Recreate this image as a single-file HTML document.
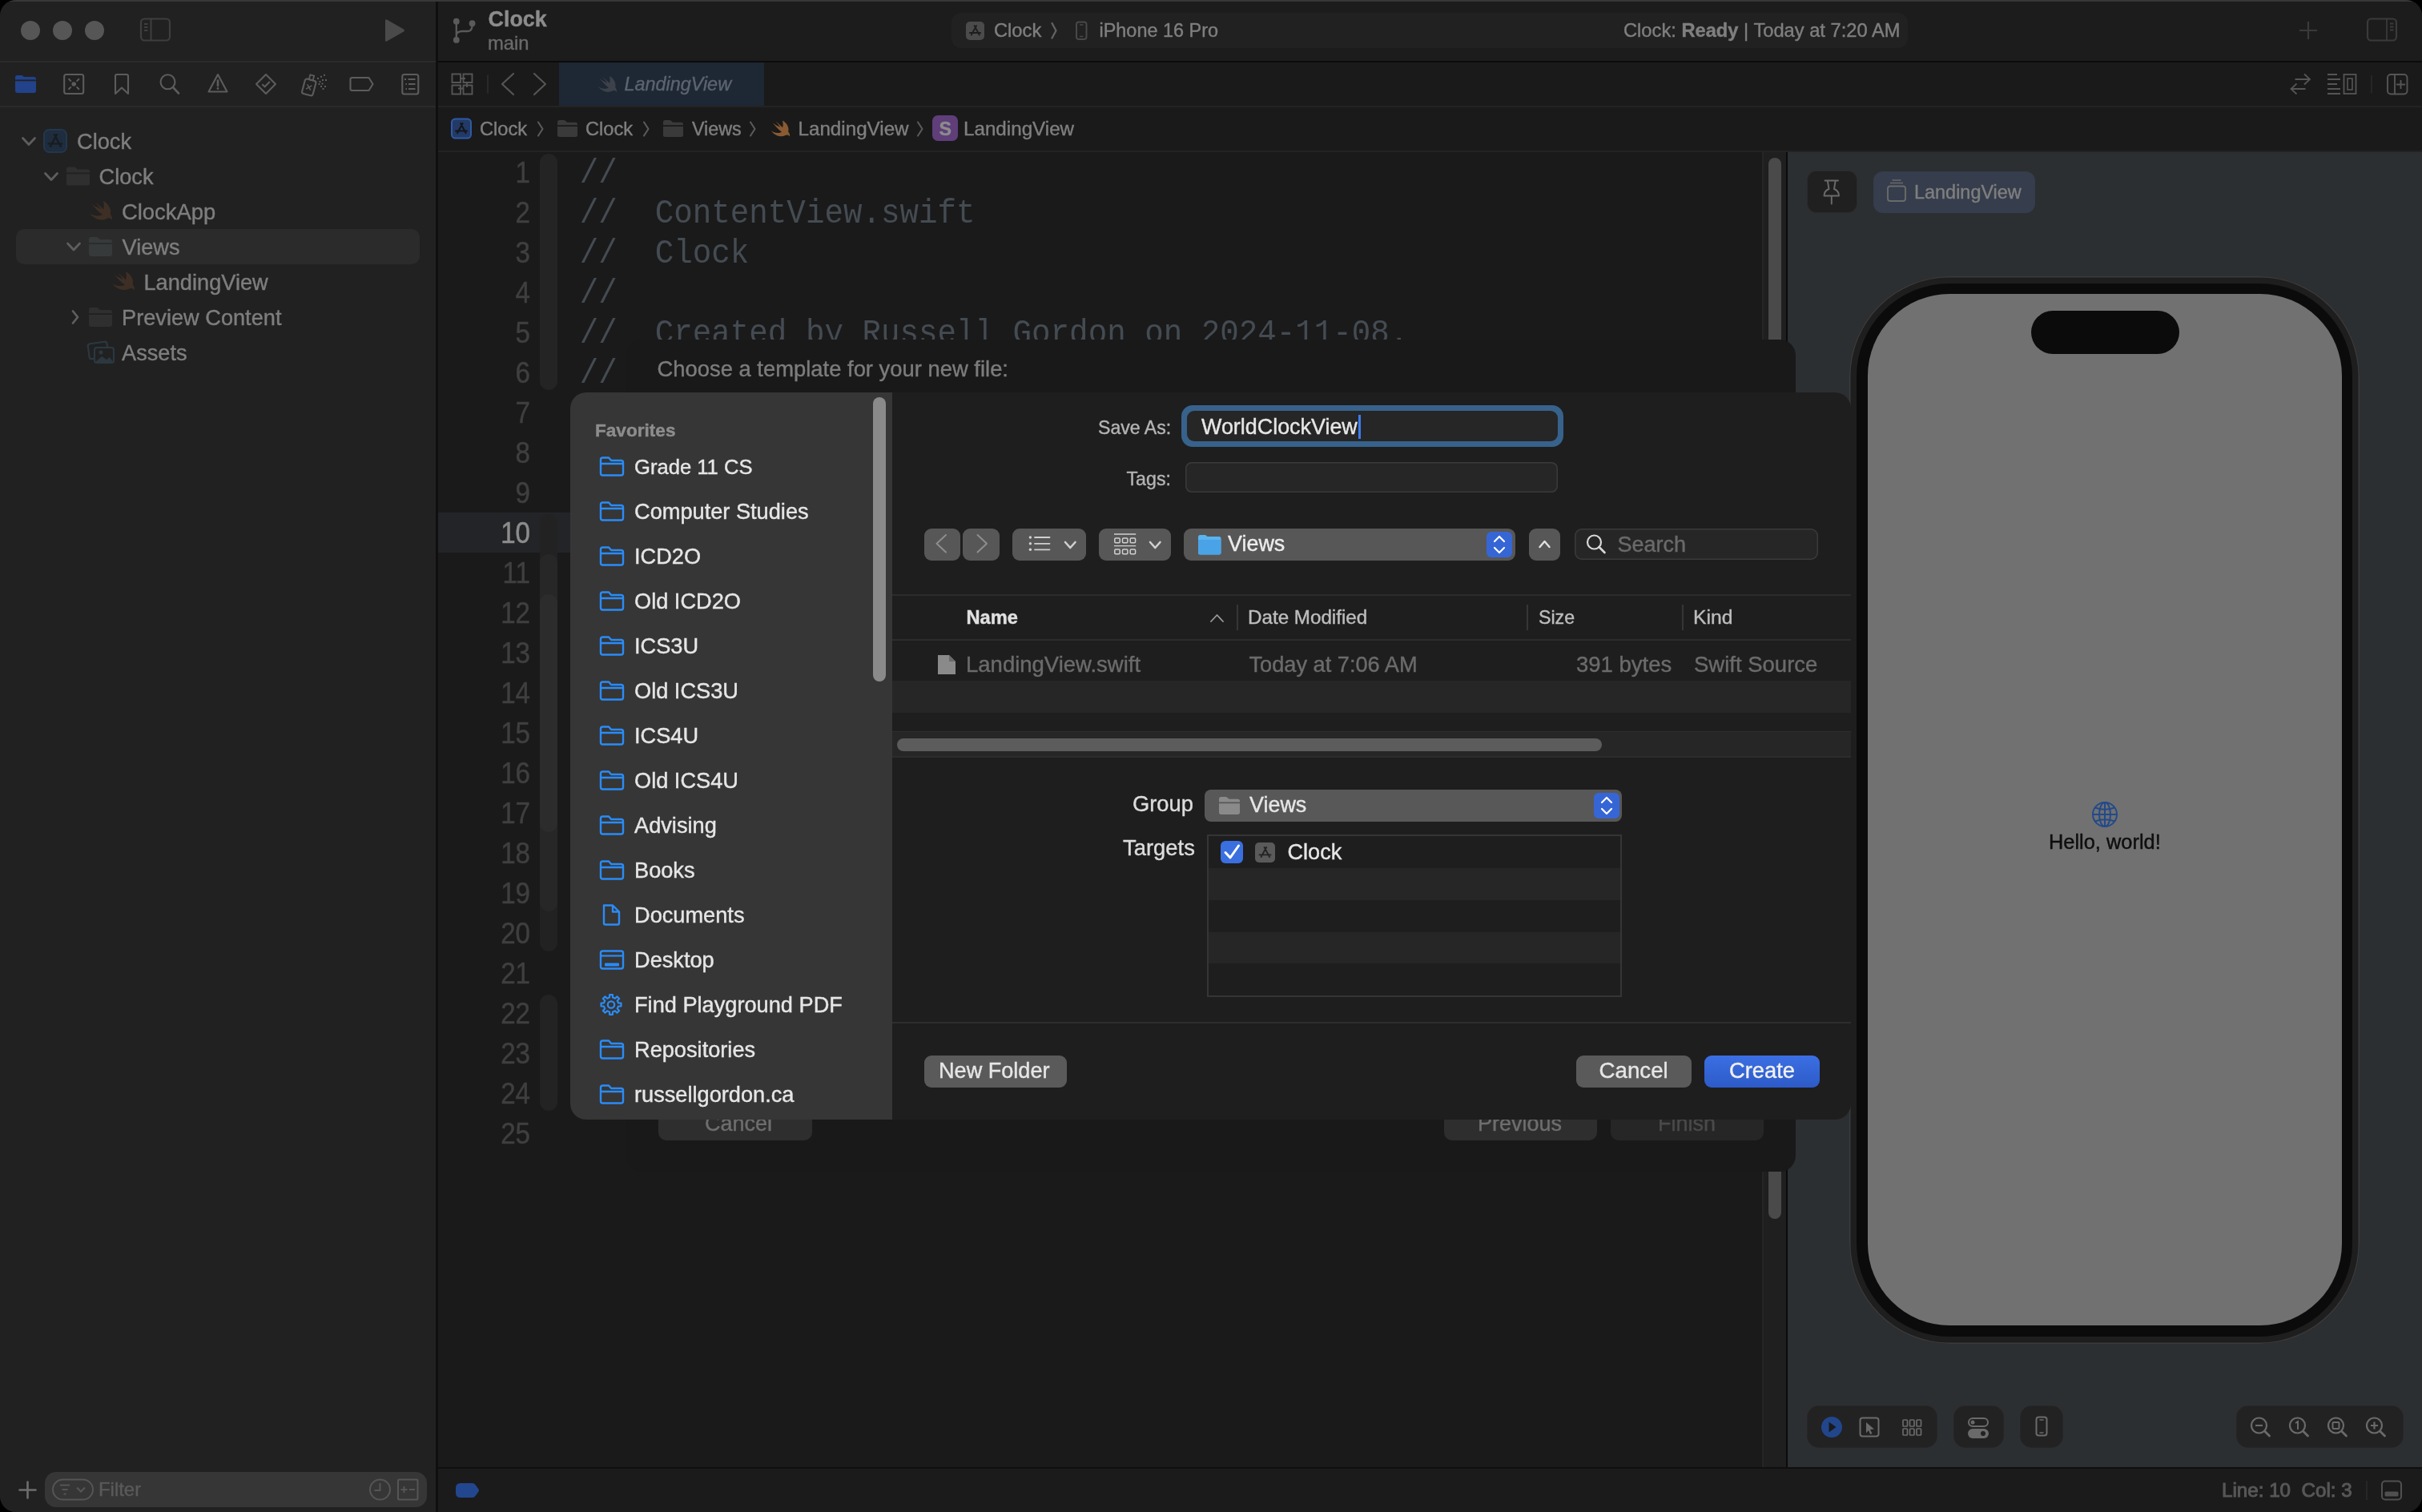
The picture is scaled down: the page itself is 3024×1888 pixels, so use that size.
<!DOCTYPE html>
<html><head><meta charset="utf-8"><title>Xcode</title>
<style>
html,body{margin:0;padding:0;background:#000;width:3024px;height:1888px;overflow:hidden;}
#w{position:absolute;left:0;top:0;width:3024px;height:1888px;border-radius:20px;overflow:hidden;background:#1c1c1c;will-change:transform;}
.r{position:absolute;}
.t{position:absolute;white-space:pre;line-height:0;font-family:'Liberation Sans', sans-serif;-webkit-font-smoothing:antialiased;-webkit-text-stroke:0.4px currentColor;}
</style></head><body><div id="w">
<div class="r" style="left:0px;top:0px;width:544px;height:1888px;background:#212121;"></div>
<div class="r" style="left:0px;top:76px;width:544px;height:2px;background:#2a2a2a;"></div>
<div class="r" style="left:0px;top:132px;width:544px;height:2px;background:#2a2a2a;"></div>
<div class="r" style="left:544px;top:0px;width:3px;height:1888px;background:#0f0f0f;"></div>
<div class="r" style="left:547px;top:0px;width:2477px;height:76px;background:#1c1c1c;"></div>
<div class="r" style="left:547px;top:76px;width:2477px;height:2px;background:#0b0b0b;"></div>
<div class="r" style="left:547px;top:78px;width:2477px;height:54px;background:#1a1a1a;"></div>
<div class="r" style="left:547px;top:132px;width:2477px;height:2px;background:#232323;"></div>
<div class="r" style="left:547px;top:134px;width:2477px;height:54px;background:#1a1a1a;"></div>
<div class="r" style="left:547px;top:188px;width:2477px;height:2px;background:#232323;"></div>
<div class="r" style="left:547px;top:190px;width:1683px;height:1642px;background:#1a1a1a;"></div>
<div class="r" style="left:547px;top:1832px;width:2477px;height:2px;background:#0f0f0f;"></div>
<div class="r" style="left:547px;top:1834px;width:2477px;height:54px;background:#1b1b1b;"></div>
<div class="r" style="left:2230px;top:190px;width:2px;height:1642px;background:#0b0b0b;"></div>
<div class="r" style="left:2232px;top:190px;width:792px;height:1642px;background:#2c2f32;"></div>
<div class="r" style="left:26px;top:26px;width:24px;height:24px;background:#565656;border-radius:12px;"></div>
<div class="r" style="left:66px;top:26px;width:24px;height:24px;background:#565656;border-radius:12px;"></div>
<div class="r" style="left:106px;top:26px;width:24px;height:24px;background:#565656;border-radius:12px;"></div>
<div class="r" style="left:20px;top:286px;width:504px;height:44px;background:#2b2b2b;border-radius:10px;"></div>
<div class="t" style="left:96px;top:177.2px;font-size:27.2px;color:#7e7e7e;">Clock</div>
<div class="t" style="left:123.5px;top:221.2px;font-size:27.2px;color:#7e7e7e;">Clock</div>
<div class="t" style="left:152px;top:265.2px;font-size:27.4px;color:#7e7e7e;">ClockApp</div>
<div class="t" style="left:152.5px;top:309.2px;font-size:27.2px;color:#7e7e7e;">Views</div>
<div class="t" style="left:179.5px;top:353.2px;font-size:27.2px;color:#7e7e7e;">LandingView</div>
<div class="t" style="left:152px;top:397.2px;font-size:27.2px;color:#7e7e7e;">Preview Content</div>
<div class="t" style="left:152px;top:441.2px;font-size:27.2px;color:#7e7e7e;">Assets</div>
<div class="r" style="left:56px;top:1838px;width:477px;height:44px;background:#363636;border-radius:14px;"></div>
<div class="t" style="left:123px;top:1860px;font-size:23.9px;color:#5a5a5a;">Filter</div>
<svg class="r" style="left:0;top:0" width="3024" height="1888" viewBox="0 0 3024 1888" fill="none"><rect x="176" y="23.5" width="36" height="27" rx="4.5" stroke="#3e3e3e" stroke-width="2.2"/><path d="M188.5 24V50M180 30H184.5M180 34H184.5M180 38H184.5" stroke="#3e3e3e" stroke-width="2"/><path d="M481 25.5 Q481 23.5 483 24.5 L504 36.5 Q506 38 504 39.5 L483 51.5 Q481 52.5 481 50.5 Z" fill="#4a4a4a"/><path d="M19 96.5 Q19 94 21.5 94 H27.5 L30 96 H42.5 Q45 96 45 98.5 V99.5 H19 Z M19 101.2 H45 V113.3 Q45 116 42.3 116 H21.7 Q19 116 19 113.3 Z" fill="#22428a"/><rect x="80.2" y="93" width="24" height="24" rx="2.5" stroke="#5c5c5c" stroke-width="2.1"/><circle cx="92.2" cy="105" r="2.8" fill="#5c5c5c"/><path d="M85.5 98.3L88.8 101.6M98.9 98.3L95.6 101.6M85.5 111.7L88.8 108.4M98.9 111.7L95.6 108.4" stroke="#5c5c5c" stroke-width="2"/><path d="M144 95 Q144 93 146 93 H158 Q160 93 160 95 V117 L152 109.5 L144 117 Z" stroke="#5c5c5c" stroke-width="2.1" stroke-linejoin="round"/><circle cx="209.5" cy="102.3" r="9" stroke="#5c5c5c" stroke-width="2.1"/><path d="M216 109L223 116.5" stroke="#5c5c5c" stroke-width="2.6" stroke-linecap="round"/><path d="M272 93 L283.5 114.5 H260.5 Z" stroke="#5c5c5c" stroke-width="2.1" stroke-linejoin="round"/><path d="M272 100.5V107" stroke="#5c5c5c" stroke-width="2.6" stroke-linecap="round"/><circle cx="272" cy="110.5" r="1.4" fill="#5c5c5c"/><path d="M332 93 L344 105 L332 117 L320 105 Z" stroke="#5c5c5c" stroke-width="2.1" stroke-linejoin="round"/><path d="M327.3 105.2 L330.6 108.2 L336.8 101.9" stroke="#5c5c5c" stroke-width="2.1"/><g transform="rotate(15 386 108)"><rect x="379" y="99.5" width="14" height="19" rx="2.5" stroke="#5c5c5c" stroke-width="2.1"/><rect x="383.5" y="93.5" width="5" height="6" stroke="#5c5c5c" stroke-width="1.8"/><path d="M383 106L389 112M389 106L383 112" stroke="#5c5c5c" stroke-width="1.6"/></g><rect x="396" y="97" width="2" height="2" fill="#5c5c5c"/><rect x="400" y="94.8" width="2" height="2" fill="#5c5c5c"/><rect x="404" y="92.8" width="2" height="2" fill="#5c5c5c"/><rect x="398.5" y="101" width="2" height="2" fill="#5c5c5c"/><rect x="402" y="99" width="2" height="2" fill="#5c5c5c"/><rect x="406" y="99" width="2" height="2" fill="#5c5c5c"/><rect x="397.5" y="104" width="2" height="2" fill="#5c5c5c"/><rect x="401.5" y="103.5" width="2" height="2" fill="#5c5c5c"/><rect x="400" y="107" width="2" height="2" fill="#5c5c5c"/><rect x="405" y="107" width="2" height="2" fill="#5c5c5c"/><rect x="402.5" y="110" width="2" height="2" fill="#5c5c5c"/><path d="M439.5 97 H460.5 L465.5 105 L460.5 113 H439.5 Q437.5 113 437.5 111 V99 Q437.5 97 439.5 97 Z" stroke="#5c5c5c" stroke-width="2.1" stroke-linejoin="round"/><rect x="502.3" y="93" width="20" height="24.5" rx="2.5" stroke="#5c5c5c" stroke-width="2.1"/><path d="M505 99H507M509.5 99H518.5M506.5 105H508M510 105H518.5M506.5 111H508M510 111H518.5" stroke="#5c5c5c" stroke-width="1.9"/><path d="M28.5 172.5 L36.0 180.5 L43.5 172.5" stroke="#5e5e5e" stroke-width="2.8" stroke-linecap="round" stroke-linejoin="round" fill="none"/><path d="M56.5 216.5 L64.0 224.5 L71.5 216.5" stroke="#5e5e5e" stroke-width="2.8" stroke-linecap="round" stroke-linejoin="round" fill="none"/><path d="M84.5 304 L92.0 312 L99.5 304" stroke="#5e5e5e" stroke-width="2.8" stroke-linecap="round" stroke-linejoin="round" fill="none"/><path d="M91 388.5 L97 396.0 L91 403.5" stroke="#5e5e5e" stroke-width="2.8" stroke-linecap="round" stroke-linejoin="round" fill="none"/><rect x="55" y="162" width="28" height="28" rx="6.5" fill="#1f2c3b" stroke="#23374f" stroke-width="2"/><rect x="58.5" y="165.5" width="21" height="21" rx="4" stroke="#1d3047" stroke-width="1.2"/><path d="M67.9 168.08 L75.82 182.82 M70.98 168.08 L62.95 182.82 M60.42 179.52 H77.58" stroke="#171b20" stroke-width="2.2" stroke-linecap="round"/><path d="M83 211.35999999999999 Q83 208.6 85.76 208.6 H92.6 Q94.6 208.6 96.6 211.59 H109.24 Q112 211.59 112 214.35 V215.5 H83 Z" fill="#2f2f2f"/><path d="M83 217.34 H112 V228.84 Q112 231.6 109.24 231.6 H85.76 Q83 231.6 83 228.84 Z" fill="#2f2f2f"/><path d="M111 298.88 Q111 296 113.88 296 H120.6 Q122.6 296 124.6 299.12 H137.12 Q140 299.12 140 302.0 V303.2 H111 Z" fill="#363a3a"/><path d="M111 305.12 H140 V317.12 Q140 320 137.12 320 H113.88 Q111 320 111 317.12 Z" fill="#363a3a"/><path d="M111 386.88 Q111 384 113.88 384 H120.6 Q122.6 384 124.6 387.12 H137.12 Q140 387.12 140 390.0 V391.2 H111 Z" fill="#2f2f2f"/><path d="M111 393.12 H140 V405.12 Q140 408 137.12 408 H113.88 Q111 408 111 405.12 Z" fill="#2f2f2f"/><path transform="translate(111.40 251.00) scale(1.5616 1.4543) translate(-2.2 -3.41)" d="M13.543 3.41c4.114 2.47 6.545 7.162 5.549 11.131-.024.093-.05.181-.076.272l.002.001c2.062 2.538 1.5 5.258 1.236 4.745-1.072-2.086-3.066-1.568-4.088-1.043a6.803 6.803 0 0 1-.281.158l-.02.012-.002.002c-2.115 1.123-4.957 1.205-7.812-.022a12.568 12.568 0 0 1-5.64-4.838c.649.48 1.35.902 2.097 1.252 3.019 1.414 6.051 1.311 8.197-.002C9.651 12.73 7.052 9.66 5.014 7.007a10.84 10.84 0 0 1-1.173-1.3c2.711 2.483 6.232 3.898 7.517 4.692.017.01.03.016.044.024-.071-.108-.07-.17-.135-.275-1.45-2.218-3.05-4.272-4.478-5.916l.001-.001c3.128 2.537 5.602 5.002 6.69 6.306l.017.024C14.564 7.855 13.58 4.894 13.543 3.41z" fill="#3e2f25"/><path transform="translate(139.60 339.00) scale(1.5452 1.4311) translate(-2.2 -3.41)" d="M13.543 3.41c4.114 2.47 6.545 7.162 5.549 11.131-.024.093-.05.181-.076.272l.002.001c2.062 2.538 1.5 5.258 1.236 4.745-1.072-2.086-3.066-1.568-4.088-1.043a6.803 6.803 0 0 1-.281.158l-.02.012-.002.002c-2.115 1.123-4.957 1.205-7.812-.022a12.568 12.568 0 0 1-5.64-4.838c.649.48 1.35.902 2.097 1.252 3.019 1.414 6.051 1.311 8.197-.002C9.651 12.73 7.052 9.66 5.014 7.007a10.84 10.84 0 0 1-1.173-1.3c2.711 2.483 6.232 3.898 7.517 4.692.017.01.03.016.044.024-.071-.108-.07-.17-.135-.275-1.45-2.218-3.05-4.272-4.478-5.916l.001-.001c3.128 2.537 5.602 5.002 6.69 6.306l.017.024C14.564 7.855 13.58 4.894 13.543 3.41z" fill="#3e2f25"/><rect x="110.5" y="428" width="24" height="19" rx="3" transform="rotate(-8 122 437)" stroke="#2b3840" stroke-width="2.2"/><rect x="118" y="434" width="24" height="19" rx="3" fill="#212121" stroke="#2b3840" stroke-width="2.2"/><circle cx="126" cy="440" r="2.5" fill="#2b3840"/><path d="M119 452 L127 445 L133 449 L137 446 L141 452 Z" fill="#2b3840"/><path d="M34.5 1850.5V1870.5M24.5 1860.5H44.5" stroke="#6e6e6e" stroke-width="2.6" stroke-linecap="round"/><rect x="66" y="1847.5" width="50" height="25" rx="12.5" stroke="#555" stroke-width="2"/><path d="M75 1854.5H87M77.5 1860H84.5M79.5 1865.5H82.5M96 1857.5L101 1862.5L106 1857.5" stroke="#555" stroke-width="2.2"/><circle cx="474.5" cy="1860" r="12.5" stroke="#555" stroke-width="2"/><path d="M474.5 1852V1861H467.5" stroke="#555" stroke-width="2"/><rect x="497" y="1847.5" width="24.5" height="25" rx="1.5" stroke="#555" stroke-width="2"/><path d="M500.5 1860H508.5M504.5 1856V1864M511 1860H518" stroke="#555" stroke-width="2"/></svg>
<div class="t" style="left:609.5px;top:24.4px;font-size:26.9px;color:#8c8c8c;font-weight:700;">Clock</div>
<div class="t" style="left:609px;top:54px;font-size:23.8px;color:#6a6a6a;">main</div>
<div class="r" style="left:1188px;top:16px;width:1194px;height:44px;background:#212121;border-radius:12px;"></div>
<div class="r" style="left:1206px;top:26.7px;width:23px;height:23.3px;background:#4b4b4b;border-radius:5px;"></div>
<div class="t" style="left:1241px;top:38px;font-size:23.7px;color:#7f7f7f;">Clock</div>
<div class="t" style="left:1372.5px;top:38px;font-size:23.45px;color:#7f7f7f;">iPhone 16 Pro</div>
<div class="t" style="left:2027px;top:38px;font-size:23.7px;color:#7f7f7f;">Clock: <b>Ready</b> | Today at 7:20 AM</div>
<div class="r" style="left:698px;top:78px;width:256px;height:54px;background:#1e2734;"></div>
<div class="t" style="left:779.5px;top:105px;font-size:23.4px;color:#5c6371;font-style:italic;">LandingView</div>
<div class="t" style="left:599px;top:161px;font-size:23.67px;color:#7f7f7f;">Clock</div>
<div class="t" style="left:731px;top:161px;font-size:23.67px;color:#7f7f7f;">Clock</div>
<div class="t" style="left:864px;top:161px;font-size:23.3px;color:#7f7f7f;">Views</div>
<div class="t" style="left:996.5px;top:161px;font-size:24.2px;color:#7f7f7f;">LandingView</div>
<div class="r" style="left:1164px;top:144px;width:32px;height:32px;background:#5f3e7a;border-radius:7px;"></div>
<div class="t" style="left:1172.5px;top:160.5px;font-size:23.3px;color:#8c8c8c;font-weight:700;">S</div>
<div class="t" style="left:1203px;top:161px;font-size:24.2px;color:#7f7f7f;">LandingView</div>
<svg class="r" style="left:0;top:0" width="3024" height="1888" viewBox="0 0 3024 1888" fill="none"><circle cx="569.8" cy="26.7" r="3.9" fill="#5a5a5a"/><circle cx="589.6" cy="29.2" r="3.9" fill="#5a5a5a"/><circle cx="569.8" cy="49.9" r="3.9" fill="#5a5a5a"/><path d="M569.8 27V50M569.8 43 Q570.5 39.5 577 39 H584 Q589.6 39 589.6 31" stroke="#5a5a5a" stroke-width="2.3"/><path d="M1216.65 32.18 L1222.77 43.56999999999999 M1219.03 32.18 L1212.825 43.56999999999999 M1210.87 41.019999999999996 H1224.13" stroke="#1e1e1e" stroke-width="1.9" stroke-linecap="round"/><path d="M1313.5 29 L1318.5 38.25 L1313.5 47.5" stroke="#626262" stroke-width="2.3" stroke-linecap="round" stroke-linejoin="round" fill="none"/><rect x="1344" y="27.5" width="12.5" height="21.5" rx="3" stroke="#484848" stroke-width="2"/><path d="M1348 31H1352.5M1348 45.5H1352.5" stroke="#484848" stroke-width="1.5"/><path d="M2882 27V49M2871 38H2893" stroke="#3a3a3a" stroke-width="2.2"/><rect x="2956" y="23.5" width="36" height="27" rx="4.5" stroke="#3a3a3a" stroke-width="2.2"/><path d="M2980 24V50M2984 29.5H2988.5M2984 33.5H2988.5M2984 37.5H2988.5" stroke="#3a3a3a" stroke-width="1.8"/><path d="M564.5 92.5H575V103H564.5Z M578.5 92.5H589.5V103H578.5Z M564.5 106.5H575V117.5H564.5Z M578.5 106.5H589.5V117.5H578.5Z M575 98H581 M583 103V109 M572 110.5H578.5" stroke="#555555" stroke-width="1.9"/><path d="M609 93.5V116.5" stroke="#2e2e2e" stroke-width="1.6"/><path d="M641 92 L627 105.0 L641 118" stroke="#555555" stroke-width="2.2" stroke-linecap="round" stroke-linejoin="round" fill="none"/><path d="M667 92 L681 105.0 L667 118" stroke="#555555" stroke-width="2.2" stroke-linecap="round" stroke-linejoin="round" fill="none"/><path transform="translate(746.20 95.00) scale(1.3041 1.2333) translate(-2.2 -3.41)" d="M13.543 3.41c4.114 2.47 6.545 7.162 5.549 11.131-.024.093-.05.181-.076.272l.002.001c2.062 2.538 1.5 5.258 1.236 4.745-1.072-2.086-3.066-1.568-4.088-1.043a6.803 6.803 0 0 1-.281.158l-.02.012-.002.002c-2.115 1.123-4.957 1.205-7.812-.022a12.568 12.568 0 0 1-5.64-4.838c.649.48 1.35.902 2.097 1.252 3.019 1.414 6.051 1.311 8.197-.002C9.651 12.73 7.052 9.66 5.014 7.007a10.84 10.84 0 0 1-1.173-1.3c2.711 2.483 6.232 3.898 7.517 4.692.017.01.03.016.044.024-.071-.108-.07-.17-.135-.275-1.45-2.218-3.05-4.272-4.478-5.916l.001-.001c3.128 2.537 5.602 5.002 6.69 6.306l.017.024C14.564 7.855 13.58 4.894 13.543 3.41z" fill="#3c414a"/><path d="M2865.5 99H2883.5M2877 92.5L2884 99L2877 105.5M2878.5 111H2860.5M2867.5 104.5L2860.5 111L2867.5 117.5" stroke="#555555" stroke-width="1.8"/><path d="M2906 93H2918M2906 99H2922M2906 105H2918M2906 111H2922M2906 117H2922" stroke="#555555" stroke-width="1.8"/><rect x="2926.5" y="93" width="15" height="24" stroke="#555555" stroke-width="1.8"/><rect x="2931" y="98" width="6" height="14" stroke="#555555" stroke-width="1.6"/><path d="M2961 94V116.5" stroke="#2a2a2a" stroke-width="1.6"/><rect x="2981" y="93" width="24.5" height="24.5" rx="4" stroke="#555555" stroke-width="1.9"/><path d="M2990 93V117.5M2997.5 100V111M2992 105.5H3003" stroke="#555555" stroke-width="1.9"/><rect x="564" y="148.5" width="24" height="24" rx="4.5" fill="#233a66" stroke="#2f5aa6" stroke-width="2"/><path d="M575.1 154.02 L581.58 166.08 M577.62 154.02 L571.05 166.08 M568.98 163.38 H583.02" stroke="#12161c" stroke-width="2" stroke-linecap="round"/><path d="M672 152.5 L677.5 161.0 L672 169.5" stroke="#5a5a5a" stroke-width="2.1" stroke-linecap="round" stroke-linejoin="round" fill="none"/><path d="M804 152.5 L809.5 161.0 L804 169.5" stroke="#5a5a5a" stroke-width="2.1" stroke-linecap="round" stroke-linejoin="round" fill="none"/><path d="M937 152.5 L942.5 161.0 L937 169.5" stroke="#5a5a5a" stroke-width="2.1" stroke-linecap="round" stroke-linejoin="round" fill="none"/><path d="M1146 152.5 L1151.5 161.0 L1146 169.5" stroke="#5a5a5a" stroke-width="2.1" stroke-linecap="round" stroke-linejoin="round" fill="none"/><path d="M696 152.52 Q696 150 698.52 150 H704.0 Q706.0 150 708.0 152.73 H718.48 Q721 152.73 721 155.25 V156.3 H696 Z" fill="#3a3a3a"/><path d="M696 157.98000000000002 H721 V168.48 Q721 171 718.48 171 H698.52 Q696 171 696 168.48 Z" fill="#3a3a3a"/><path d="M828 152.52 Q828 150 830.52 150 H836.0 Q838.0 150 840.0 152.73 H850.48 Q853 152.73 853 155.25 V156.3 H828 Z" fill="#3a3a3a"/><path d="M828 157.98000000000002 H853 V168.48 Q853 171 850.48 171 H830.52 Q828 171 828 168.48 Z" fill="#3a3a3a"/><path transform="translate(962.50 150.50) scale(1.2877 1.2216) translate(-2.2 -3.41)" d="M13.543 3.41c4.114 2.47 6.545 7.162 5.549 11.131-.024.093-.05.181-.076.272l.002.001c2.062 2.538 1.5 5.258 1.236 4.745-1.072-2.086-3.066-1.568-4.088-1.043a6.803 6.803 0 0 1-.281.158l-.02.012-.002.002c-2.115 1.123-4.957 1.205-7.812-.022a12.568 12.568 0 0 1-5.64-4.838c.649.48 1.35.902 2.097 1.252 3.019 1.414 6.051 1.311 8.197-.002C9.651 12.73 7.052 9.66 5.014 7.007a10.84 10.84 0 0 1-1.173-1.3c2.711 2.483 6.232 3.898 7.517 4.692.017.01.03.016.044.024-.071-.108-.07-.17-.135-.275-1.45-2.218-3.05-4.272-4.478-5.916l.001-.001c3.128 2.537 5.602 5.002 6.69 6.306l.017.024C14.564 7.855 13.58 4.894 13.543 3.41z" fill="#8a5a32"/></svg>
<div class="r" style="left:547px;top:640px;width:165px;height:50px;background:#232427;"></div>
<div class="r" style="left:674px;top:192px;width:22px;height:295px;background:#242424;border-radius:11px;"></div>
<div class="r" style="left:674px;top:642px;width:22px;height:546px;background:#222222;border-radius:11px;"></div>
<div class="r" style="left:674px;top:692px;width:22px;height:446px;background:#272727;border-radius:11px;"></div>
<div class="r" style="left:674px;top:742px;width:22px;height:297px;background:#2c2c2c;border-radius:11px;"></div>
<div class="r" style="left:674px;top:1242px;width:22px;height:145px;background:#232323;border-radius:11px;"></div>
<div class="t" style="left:562px;width:100px;text-align:right;top:216px;font-size:36px;color:#3f3f3f;transform:scaleX(0.92);transform-origin:100% 0;-webkit-text-stroke:0.5px #3f3f3f;">1</div>
<div class="t" style="left:562px;width:100px;text-align:right;top:266px;font-size:36px;color:#3f3f3f;transform:scaleX(0.92);transform-origin:100% 0;-webkit-text-stroke:0.5px #3f3f3f;">2</div>
<div class="t" style="left:562px;width:100px;text-align:right;top:316px;font-size:36px;color:#3f3f3f;transform:scaleX(0.92);transform-origin:100% 0;-webkit-text-stroke:0.5px #3f3f3f;">3</div>
<div class="t" style="left:562px;width:100px;text-align:right;top:366px;font-size:36px;color:#3f3f3f;transform:scaleX(0.92);transform-origin:100% 0;-webkit-text-stroke:0.5px #3f3f3f;">4</div>
<div class="t" style="left:562px;width:100px;text-align:right;top:416px;font-size:36px;color:#3f3f3f;transform:scaleX(0.92);transform-origin:100% 0;-webkit-text-stroke:0.5px #3f3f3f;">5</div>
<div class="t" style="left:562px;width:100px;text-align:right;top:466px;font-size:36px;color:#3f3f3f;transform:scaleX(0.92);transform-origin:100% 0;-webkit-text-stroke:0.5px #3f3f3f;">6</div>
<div class="t" style="left:562px;width:100px;text-align:right;top:516px;font-size:36px;color:#3f3f3f;transform:scaleX(0.92);transform-origin:100% 0;-webkit-text-stroke:0.5px #3f3f3f;">7</div>
<div class="t" style="left:562px;width:100px;text-align:right;top:566px;font-size:36px;color:#3f3f3f;transform:scaleX(0.92);transform-origin:100% 0;-webkit-text-stroke:0.5px #3f3f3f;">8</div>
<div class="t" style="left:562px;width:100px;text-align:right;top:616px;font-size:36px;color:#3f3f3f;transform:scaleX(0.92);transform-origin:100% 0;-webkit-text-stroke:0.5px #3f3f3f;">9</div>
<div class="t" style="left:562px;width:100px;text-align:right;top:666px;font-size:36px;color:#8c8c8c;transform:scaleX(0.92);transform-origin:100% 0;-webkit-text-stroke:0.5px #8c8c8c;">10</div>
<div class="t" style="left:562px;width:100px;text-align:right;top:716px;font-size:36px;color:#3f3f3f;transform:scaleX(0.92);transform-origin:100% 0;-webkit-text-stroke:0.5px #3f3f3f;">11</div>
<div class="t" style="left:562px;width:100px;text-align:right;top:766px;font-size:36px;color:#3f3f3f;transform:scaleX(0.92);transform-origin:100% 0;-webkit-text-stroke:0.5px #3f3f3f;">12</div>
<div class="t" style="left:562px;width:100px;text-align:right;top:816px;font-size:36px;color:#3f3f3f;transform:scaleX(0.92);transform-origin:100% 0;-webkit-text-stroke:0.5px #3f3f3f;">13</div>
<div class="t" style="left:562px;width:100px;text-align:right;top:866px;font-size:36px;color:#3f3f3f;transform:scaleX(0.92);transform-origin:100% 0;-webkit-text-stroke:0.5px #3f3f3f;">14</div>
<div class="t" style="left:562px;width:100px;text-align:right;top:916px;font-size:36px;color:#3f3f3f;transform:scaleX(0.92);transform-origin:100% 0;-webkit-text-stroke:0.5px #3f3f3f;">15</div>
<div class="t" style="left:562px;width:100px;text-align:right;top:966px;font-size:36px;color:#3f3f3f;transform:scaleX(0.92);transform-origin:100% 0;-webkit-text-stroke:0.5px #3f3f3f;">16</div>
<div class="t" style="left:562px;width:100px;text-align:right;top:1016px;font-size:36px;color:#3f3f3f;transform:scaleX(0.92);transform-origin:100% 0;-webkit-text-stroke:0.5px #3f3f3f;">17</div>
<div class="t" style="left:562px;width:100px;text-align:right;top:1066px;font-size:36px;color:#3f3f3f;transform:scaleX(0.92);transform-origin:100% 0;-webkit-text-stroke:0.5px #3f3f3f;">18</div>
<div class="t" style="left:562px;width:100px;text-align:right;top:1116px;font-size:36px;color:#3f3f3f;transform:scaleX(0.92);transform-origin:100% 0;-webkit-text-stroke:0.5px #3f3f3f;">19</div>
<div class="t" style="left:562px;width:100px;text-align:right;top:1166px;font-size:36px;color:#3f3f3f;transform:scaleX(0.92);transform-origin:100% 0;-webkit-text-stroke:0.5px #3f3f3f;">20</div>
<div class="t" style="left:562px;width:100px;text-align:right;top:1216px;font-size:36px;color:#3f3f3f;transform:scaleX(0.92);transform-origin:100% 0;-webkit-text-stroke:0.5px #3f3f3f;">21</div>
<div class="t" style="left:562px;width:100px;text-align:right;top:1266px;font-size:36px;color:#3f3f3f;transform:scaleX(0.92);transform-origin:100% 0;-webkit-text-stroke:0.5px #3f3f3f;">22</div>
<div class="t" style="left:562px;width:100px;text-align:right;top:1316px;font-size:36px;color:#3f3f3f;transform:scaleX(0.92);transform-origin:100% 0;-webkit-text-stroke:0.5px #3f3f3f;">23</div>
<div class="t" style="left:562px;width:100px;text-align:right;top:1366px;font-size:36px;color:#3f3f3f;transform:scaleX(0.92);transform-origin:100% 0;-webkit-text-stroke:0.5px #3f3f3f;">24</div>
<div class="t" style="left:562px;width:100px;text-align:right;top:1416px;font-size:36px;color:#3f3f3f;transform:scaleX(0.92);transform-origin:100% 0;-webkit-text-stroke:0.5px #3f3f3f;">25</div>
<div class="t" style="left:723.7px;top:216.8px;font-size:39.2px;color:#444b52;font-family:'Liberation Mono', monospace;transform:scaleY(1.1);-webkit-text-stroke:0;">//</div>
<div class="t" style="left:723.7px;top:266.8px;font-size:39.2px;color:#444b52;font-family:'Liberation Mono', monospace;transform:scaleY(1.1);-webkit-text-stroke:0;">//  ContentView.swift</div>
<div class="t" style="left:723.7px;top:316.8px;font-size:39.2px;color:#444b52;font-family:'Liberation Mono', monospace;transform:scaleY(1.1);-webkit-text-stroke:0;">//  Clock</div>
<div class="t" style="left:723.7px;top:366.8px;font-size:39.2px;color:#444b52;font-family:'Liberation Mono', monospace;transform:scaleY(1.1);-webkit-text-stroke:0;">//</div>
<div class="t" style="left:723.7px;top:416.8px;font-size:39.2px;color:#444b52;font-family:'Liberation Mono', monospace;transform:scaleY(1.1);-webkit-text-stroke:0;">//  Created by Russell Gordon on 2024-11-08.</div>
<div class="t" style="left:723.7px;top:466.8px;font-size:39.2px;color:#444b52;font-family:'Liberation Mono', monospace;transform:scaleY(1.1);-webkit-text-stroke:0;">//</div>
<div class="r" style="left:2200px;top:190px;width:30px;height:1642px;background:#1f1f1f;"></div>
<div class="r" style="left:2200px;top:190px;width:2px;height:1642px;background:#252525;"></div>
<div class="r" style="left:2208px;top:197px;width:16px;height:1325px;background:#4a4a4a;border-radius:8px;"></div>
<svg class="r" style="left:0;top:0" width="3024" height="1888" viewBox="0 0 3024 1888" fill="none"><path d="M575 1852 H590 Q592 1852 593.5 1854 L597.5 1859.5 Q598.5 1861 597.5 1862.5 L593.5 1868 Q592 1870 590 1870 H575 Q569 1870 569 1864 V1858 Q569 1852 575 1852 Z" fill="#23478f"/></svg>
<div class="t" style="left:2774px;top:1861px;font-size:24.2px;color:#575757;-webkit-text-stroke:1px #575757;">Line: 10  Col: 3</div>
<svg class="r" style="left:0;top:0" width="3024" height="1888" viewBox="0 0 3024 1888" fill="none"><path d="M2955 1849V1873" stroke="#2a2a2a" stroke-width="1.6"/><rect x="2974" y="1849.5" width="24" height="23" rx="4" stroke="#505050" stroke-width="2"/><rect x="2977.5" y="1862.5" width="17" height="6" rx="1.5" fill="#505050"/></svg>
<div class="r" style="left:2257px;top:214px;width:61px;height:51px;background:#202020;border-radius:11px;box-shadow:0 0 0 1px #2a2a2a;"></div>
<div class="r" style="left:2339px;top:214px;width:202px;height:52px;background:#363d4c;border-radius:12px;"></div>
<div class="t" style="left:2390px;top:240px;font-size:23.45px;color:#7f7f7f;">LandingView</div>
<div class="r" style="left:2309px;top:345px;width:637px;height:1333px;background:#1e1e1e;border-radius:125px;box-shadow:inset 0 0 0 1.5px #3a3a3a;"></div>
<div class="r" style="left:2318px;top:354px;width:619px;height:1315px;background:#0b0b0b;border-radius:116px;"></div>
<div class="r" style="left:2332px;top:367px;width:592px;height:1288px;background:#717171;border-radius:102px;"></div>
<div class="r" style="left:2536px;top:388px;width:185px;height:54px;background:#0b0b0b;border-radius:27px;"></div>
<div class="t" style="left:2558px;top:1051px;font-size:25.4px;color:#0e0e0e;">Hello, world!</div>
<div class="r" style="left:2257px;top:1756px;width:161px;height:51px;background:#222222;border-radius:14px;box-shadow:0 0 0 1px #262626;"></div>
<div class="r" style="left:2440px;top:1756px;width:61px;height:51px;background:#222222;border-radius:14px;box-shadow:0 0 0 1px #262626;"></div>
<div class="r" style="left:2523px;top:1756px;width:52px;height:51px;background:#222222;border-radius:14px;box-shadow:0 0 0 1px #262626;"></div>
<div class="r" style="left:2793px;top:1756px;width:207px;height:51px;background:#222222;border-radius:14px;box-shadow:0 0 0 1px #262626;"></div>
<svg class="r" style="left:0;top:0" width="3024" height="1888" viewBox="0 0 3024 1888" fill="none"><g transform="translate(2610 999)"><circle cx="18" cy="18" r="15" stroke="#234a8a" stroke-width="2.0"/><ellipse cx="18" cy="18" rx="7" ry="15" stroke="#234a8a" stroke-width="2.0"/><path d="M18 3V33M3 18H33M6 9.5Q18 14 30 9.5M6 26.5Q18 22 30 26.5" stroke="#234a8a" stroke-width="2.0"/></g><path d="M2278.5 225.5H2295M2281.8 225.5L2283.5 236Q2277.5 238.5 2277.5 244.5H2296Q2296 238.5 2290 236L2291.7 225.5M2286.8 244.5V254.5" stroke="#6a6a6a" stroke-width="1.9" stroke-linejoin="round" stroke-linecap="round"/><rect x="2357" y="232.5" width="22" height="18.5" rx="3" stroke="#6a6a6a" stroke-width="1.9"/><path d="M2360 228.5H2376M2362.5 225H2373.5" stroke="#6a6a6a" stroke-width="1.6"/><circle cx="2287" cy="1782" r="13" fill="#22468c"/><path d="M2283.5 1775.5L2292.5 1782L2283.5 1788.5Z" fill="#1a1a1a"/><rect x="2322.5" y="1770.5" width="23" height="23" rx="3" stroke="#6a6a6a" stroke-width="2"/><path d="M2330 1776L2340 1784.5L2335 1785L2337.5 1790L2335 1791L2333 1786L2330 1789.5Z" fill="#6a6a6a"/><rect x="2376.0" y="1773" width="5.5" height="8" rx="1" stroke="#6a6a6a" stroke-width="1.7"/><rect x="2384.5" y="1773" width="5.5" height="8" rx="1" stroke="#6a6a6a" stroke-width="1.7"/><rect x="2393.0" y="1773" width="5.5" height="8" rx="1" stroke="#6a6a6a" stroke-width="1.7"/><rect x="2376.0" y="1784" width="5.5" height="8" rx="1" stroke="#6a6a6a" stroke-width="1.7"/><rect x="2384.5" y="1784" width="5.5" height="8" rx="1" stroke="#6a6a6a" stroke-width="1.7"/><rect x="2393.0" y="1784" width="5.5" height="8" rx="1" stroke="#6a6a6a" stroke-width="1.7"/><rect x="2458" y="1771" width="24" height="10" rx="5" stroke="#6a6a6a" stroke-width="2"/><circle cx="2463" cy="1776" r="2.5" fill="#6a6a6a"/><rect x="2457" y="1784" width="26" height="12" rx="6" fill="#6a6a6a"/><circle cx="2476" cy="1790" r="3" fill="#222"/><rect x="2542.5" y="1769.5" width="13" height="23" rx="3" stroke="#6a6a6a" stroke-width="2"/><path d="M2546.5 1789H2551.5M2546.5 1773H2551.5" stroke="#6a6a6a" stroke-width="1.4"/><circle cx="2820.5" cy="1780" r="9.5" stroke="#6a6a6a" stroke-width="2.2"/><path d="M2827.5 1787L2833.5 1793" stroke="#6a6a6a" stroke-width="2.8" stroke-linecap="round"/><path d="M2816.0 1780H2825.0" stroke="#6a6a6a" stroke-width="2.2"/><circle cx="2868.5" cy="1780" r="9.5" stroke="#6a6a6a" stroke-width="2.2"/><path d="M2875.5 1787L2881.5 1793" stroke="#6a6a6a" stroke-width="2.8" stroke-linecap="round"/><path d="M2866.0 1777L2869.0 1775V1785" stroke="#6a6a6a" stroke-width="2"/><circle cx="2916.5" cy="1780" r="9.5" stroke="#6a6a6a" stroke-width="2.2"/><path d="M2923.5 1787L2929.5 1793" stroke="#6a6a6a" stroke-width="2.8" stroke-linecap="round"/><rect x="2912.5" y="1776" width="8" height="8" rx="1" stroke="#6a6a6a" stroke-width="2"/><circle cx="2964.5" cy="1780" r="9.5" stroke="#6a6a6a" stroke-width="2.2"/><path d="M2971.5 1787L2977.5 1793" stroke="#6a6a6a" stroke-width="2.8" stroke-linecap="round"/><path d="M2960.0 1780H2969.0M2964.5 1775.5V1784.5" stroke="#6a6a6a" stroke-width="2.2"/></svg>
<div class="r" style="left:782px;top:424px;width:1460px;height:1039px;background:#191919;border-radius:20px;"></div>
<div class="t" style="left:820.5px;top:460.5px;font-size:27.4px;color:#7c7c7c;">Choose a template for your new file:</div>
<div class="r" style="left:822px;top:1384px;width:192px;height:40px;background:#2e2e2e;border-radius:10px;"></div>
<div class="t" style="left:880px;top:1403px;font-size:27px;color:#6e6e6e;">Cancel</div>
<div class="r" style="left:1803px;top:1384px;width:191px;height:40px;background:#2e2e2e;border-radius:10px;"></div>
<div class="t" style="left:1845px;top:1403px;font-size:27px;color:#6e6e6e;">Previous</div>
<div class="r" style="left:2011px;top:1384px;width:191px;height:40px;background:#262626;border-radius:10px;"></div>
<div class="t" style="left:2070px;top:1403px;font-size:27px;color:#4a4a4a;">Finish</div>
<div class="r" style="left:1114px;top:490px;width:1197px;height:908px;background:#1e1e1e;border-radius:0 20px 20px 0;"></div>
<div class="r" style="left:712px;top:490px;width:402px;height:908px;background:#363636;border-radius:20px 0 0 20px;"></div>
<div class="r" style="left:1090px;top:496px;width:16px;height:355px;background:#8a8a8a;border-radius:8px;"></div>
<div class="t" style="left:743px;top:538px;font-size:22.6px;color:#8d8d8d;font-weight:700;">Favorites</div>
<div class="t" style="left:792px;top:582.5px;font-size:25.6px;color:#e6e6e6;">Grade 11 CS</div>
<div class="t" style="left:792px;top:638.5px;font-size:27.2px;color:#e6e6e6;">Computer Studies</div>
<div class="t" style="left:792px;top:694.5px;font-size:27.2px;color:#e6e6e6;">ICD2O</div>
<div class="t" style="left:792px;top:750.5px;font-size:27.2px;color:#e6e6e6;">Old ICD2O</div>
<div class="t" style="left:792px;top:806.5px;font-size:27.2px;color:#e6e6e6;">ICS3U</div>
<div class="t" style="left:792px;top:862.5px;font-size:27.2px;color:#e6e6e6;">Old ICS3U</div>
<div class="t" style="left:792px;top:918.5px;font-size:27.2px;color:#e6e6e6;">ICS4U</div>
<div class="t" style="left:792px;top:974.5px;font-size:27.2px;color:#e6e6e6;">Old ICS4U</div>
<div class="t" style="left:792px;top:1030.5px;font-size:27.2px;color:#e6e6e6;">Advising</div>
<div class="t" style="left:792px;top:1086.5px;font-size:27.2px;color:#e6e6e6;">Books</div>
<div class="t" style="left:792px;top:1142.5px;font-size:27.2px;color:#e6e6e6;">Documents</div>
<div class="t" style="left:792px;top:1198.5px;font-size:27.2px;color:#e6e6e6;">Desktop</div>
<div class="t" style="left:792px;top:1254.5px;font-size:27.2px;color:#e6e6e6;">Find Playground PDF</div>
<div class="t" style="left:792px;top:1310.5px;font-size:27.2px;color:#e6e6e6;">Repositories</div>
<div class="t" style="left:792px;top:1366.5px;font-size:27.2px;color:#e6e6e6;">russellgordon.ca</div>
<div class="t" style="left:1371px;top:534px;font-size:23.1px;color:#b4b4b4;">Save As:</div>
<div class="r" style="left:1475px;top:506px;width:477px;height:52px;background:#37628c;border-radius:14px;"></div>
<div class="r" style="left:1482px;top:513px;width:463px;height:38px;background:#262626;border-radius:9px;"></div>
<div class="t" style="left:1500px;top:533px;font-size:26.9px;color:#e6e6e6;">WorldClockView</div>
<div class="r" style="left:1696px;top:518px;width:3px;height:30px;background:#3b7cf2;"></div>
<div class="t" style="left:1406.5px;top:598px;font-size:23.2px;color:#b4b4b4;">Tags:</div>
<div class="r" style="left:1480px;top:577px;width:465px;height:38px;background:#262626;border-radius:8px;box-shadow:inset 0 0 0 1.5px #3a3a3a;"></div>
<div class="r" style="left:1154px;top:660px;width:45px;height:40px;background:#575757;border-radius:9px;"></div>
<div class="r" style="left:1202px;top:660px;width:46px;height:40px;background:#575757;border-radius:9px;"></div>
<div class="r" style="left:1264px;top:660px;width:92px;height:40px;background:#575757;border-radius:9px;"></div>
<div class="r" style="left:1372px;top:660px;width:90px;height:40px;background:#575757;border-radius:9px;"></div>
<div class="r" style="left:1478px;top:660px;width:414px;height:40px;background:#575757;border-radius:9px;"></div>
<div class="r" style="left:1856px;top:664px;width:32px;height:32px;background:#3666d6;border-radius:6px;"></div>
<div class="t" style="left:1533px;top:679px;font-size:26.9px;color:#ececec;">Views</div>
<div class="r" style="left:1909px;top:660px;width:39px;height:40px;background:#575757;border-radius:9px;"></div>
<div class="r" style="left:1966px;top:660px;width:304px;height:39px;background:#262626;border-radius:9px;box-shadow:inset 0 0 0 1.5px #3a3a3a;"></div>
<div class="t" style="left:2019.5px;top:680px;font-size:27px;color:#6a6a6a;">Search</div>
<div class="r" style="left:1114px;top:742px;width:1197px;height:2px;background:#2c2c2c;"></div>
<div class="t" style="left:1206.5px;top:771px;font-size:23.7px;color:#e0e0e0;font-weight:700;">Name</div>
<div class="r" style="left:1544px;top:755px;width:2px;height:32px;background:#363636;"></div>
<div class="t" style="left:1558px;top:771px;font-size:24.2px;color:#bdbdbd;">Date Modified</div>
<div class="r" style="left:1906px;top:755px;width:2px;height:32px;background:#363636;"></div>
<div class="t" style="left:1921px;top:771px;font-size:23.2px;color:#bdbdbd;">Size</div>
<div class="r" style="left:2100px;top:755px;width:2px;height:32px;background:#363636;"></div>
<div class="t" style="left:2114px;top:771px;font-size:24.7px;color:#bdbdbd;">Kind</div>
<div class="r" style="left:1114px;top:798px;width:1197px;height:2px;background:#2c2c2c;"></div>
<div class="t" style="left:1206px;top:830px;font-size:27.5px;color:#6b6b6b;">LandingView.swift</div>
<div class="t" style="left:1559.5px;top:830px;font-size:27.2px;color:#6b6b6b;">Today at 7:06 AM</div>
<div class="t" style="left:1968px;top:830px;font-size:27.5px;color:#6b6b6b;">391 bytes</div>
<div class="t" style="left:2115px;top:830px;font-size:27.5px;color:#6b6b6b;">Swift Source</div>
<div class="r" style="left:1114px;top:850px;width:1197px;height:40px;background:#262626;"></div>
<div class="r" style="left:1114px;top:913px;width:1197px;height:33px;background:#262626;box-shadow:inset 0 1px 0 #2e2e2e;"></div>
<div class="r" style="left:1120px;top:922px;width:880px;height:16px;background:#5c5c5c;border-radius:8px;"></div>
<div class="r" style="left:1114px;top:944px;width:1197px;height:2px;background:#2c2c2c;"></div>
<div class="t" style="left:1414px;top:1004px;font-size:27.3px;color:#dcdcdc;">Group</div>
<div class="r" style="left:1504px;top:986px;width:521px;height:40px;background:#585858;border-radius:8px;"></div>
<div class="r" style="left:1990px;top:990px;width:32px;height:32px;background:#3666d6;border-radius:6px;"></div>
<div class="t" style="left:1560px;top:1005px;font-size:26.9px;color:#e6e6e6;">Views</div>
<div class="t" style="left:1402px;top:1059px;font-size:27.4px;color:#dcdcdc;">Targets</div>
<div class="r" style="left:1507px;top:1042px;width:518px;height:203px;background:#1e1e1e;box-shadow:inset 0 0 0 2px #353535;"></div>
<div class="r" style="left:1509px;top:1084px;width:514px;height:40px;background:#262626;"></div>
<div class="r" style="left:1509px;top:1164px;width:514px;height:39px;background:#262626;"></div>
<div class="r" style="left:1524px;top:1050px;width:28px;height:28px;background:#3a6fe0;border-radius:6px;"></div>
<div class="r" style="left:1567px;top:1052px;width:25px;height:25px;background:#5a5a5a;border-radius:5px;"></div>
<div class="t" style="left:1607.5px;top:1064px;font-size:27.1px;color:#e6e6e6;">Clock</div>
<div class="r" style="left:1114px;top:1276px;width:1197px;height:2px;background:#2e2e2e;"></div>
<div class="r" style="left:1154px;top:1318px;width:178px;height:40px;background:#5a5a5a;border-radius:9px;"></div>
<div class="t" style="left:1172px;top:1337px;font-size:27.1px;color:#e6e6e6;">New Folder</div>
<div class="r" style="left:1968px;top:1318px;width:144px;height:40px;background:#5a5a5a;border-radius:9px;"></div>
<div class="t" style="left:1996.5px;top:1337px;font-size:27.7px;color:#e6e6e6;">Cancel</div>
<div class="r" style="left:2128px;top:1318px;width:144px;height:40px;background:linear-gradient(#3b6fe3,#2d5bc8);border-radius:9px;"></div>
<div class="t" style="left:2159px;top:1337px;font-size:27.3px;color:#f0f0f0;">Create</div>
<svg class="r" style="left:0;top:0" width="3024" height="1888" viewBox="0 0 3024 1888" fill="none"><path d="M750 574.0 Q750 571.5 752.5 571.5 H760.08 L763.08 575.02 H775.5 Q778 575.02 778 577.52 V591.0 Q778 593.5 775.5 593.5 H752.5 Q750 593.5 750 591.0 Z M750 578.98 H778" stroke="#2a8cf7" stroke-width="2.4" stroke-linejoin="round" fill="none"/><path d="M750 630.0 Q750 627.5 752.5 627.5 H760.08 L763.08 631.02 H775.5 Q778 631.02 778 633.52 V647.0 Q778 649.5 775.5 649.5 H752.5 Q750 649.5 750 647.0 Z M750 634.98 H778" stroke="#2a8cf7" stroke-width="2.4" stroke-linejoin="round" fill="none"/><path d="M750 686.0 Q750 683.5 752.5 683.5 H760.08 L763.08 687.02 H775.5 Q778 687.02 778 689.52 V703.0 Q778 705.5 775.5 705.5 H752.5 Q750 705.5 750 703.0 Z M750 690.98 H778" stroke="#2a8cf7" stroke-width="2.4" stroke-linejoin="round" fill="none"/><path d="M750 742.0 Q750 739.5 752.5 739.5 H760.08 L763.08 743.02 H775.5 Q778 743.02 778 745.52 V759.0 Q778 761.5 775.5 761.5 H752.5 Q750 761.5 750 759.0 Z M750 746.98 H778" stroke="#2a8cf7" stroke-width="2.4" stroke-linejoin="round" fill="none"/><path d="M750 798.0 Q750 795.5 752.5 795.5 H760.08 L763.08 799.02 H775.5 Q778 799.02 778 801.52 V815.0 Q778 817.5 775.5 817.5 H752.5 Q750 817.5 750 815.0 Z M750 802.98 H778" stroke="#2a8cf7" stroke-width="2.4" stroke-linejoin="round" fill="none"/><path d="M750 854.0 Q750 851.5 752.5 851.5 H760.08 L763.08 855.02 H775.5 Q778 855.02 778 857.52 V871.0 Q778 873.5 775.5 873.5 H752.5 Q750 873.5 750 871.0 Z M750 858.98 H778" stroke="#2a8cf7" stroke-width="2.4" stroke-linejoin="round" fill="none"/><path d="M750 910.0 Q750 907.5 752.5 907.5 H760.08 L763.08 911.02 H775.5 Q778 911.02 778 913.52 V927.0 Q778 929.5 775.5 929.5 H752.5 Q750 929.5 750 927.0 Z M750 914.98 H778" stroke="#2a8cf7" stroke-width="2.4" stroke-linejoin="round" fill="none"/><path d="M750 966.0 Q750 963.5 752.5 963.5 H760.08 L763.08 967.02 H775.5 Q778 967.02 778 969.52 V983.0 Q778 985.5 775.5 985.5 H752.5 Q750 985.5 750 983.0 Z M750 970.98 H778" stroke="#2a8cf7" stroke-width="2.4" stroke-linejoin="round" fill="none"/><path d="M750 1022.0 Q750 1019.5 752.5 1019.5 H760.08 L763.08 1023.02 H775.5 Q778 1023.02 778 1025.52 V1039.0 Q778 1041.5 775.5 1041.5 H752.5 Q750 1041.5 750 1039.0 Z M750 1026.98 H778" stroke="#2a8cf7" stroke-width="2.4" stroke-linejoin="round" fill="none"/><path d="M750 1078.0 Q750 1075.5 752.5 1075.5 H760.08 L763.08 1079.02 H775.5 Q778 1079.02 778 1081.52 V1095.0 Q778 1097.5 775.5 1097.5 H752.5 Q750 1097.5 750 1095.0 Z M750 1082.98 H778" stroke="#2a8cf7" stroke-width="2.4" stroke-linejoin="round" fill="none"/><path d="M754 1130.5 H765 L773 1138.5 V1152.5 Q773 1154.5 771 1154.5 H756 Q754 1154.5 754 1152.5 Z M765 1130.5 V1138.5 H773" stroke="#2a8cf7" stroke-width="2.4" stroke-linejoin="round"/><rect x="750" y="1187.5" width="28" height="22" rx="2.5" stroke="#2a8cf7" stroke-width="2.4"/><path d="M750 1193.5 H778" stroke="#2a8cf7" stroke-width="2.2"/><rect x="755" y="1202.5" width="18" height="4" rx="1" fill="#2a8cf7"/><path d="M760.99 1245.52 L761.12 1242.04 L764.88 1242.04 L765.01 1245.52 L766.52 1246.00 L767.93 1246.73 L770.48 1244.36 L773.14 1247.02 L770.77 1249.57 L771.50 1250.98 L771.98 1252.49 L775.46 1252.62 L775.46 1256.38 L771.98 1256.51 L771.50 1258.02 L770.77 1259.43 L773.14 1261.98 L770.48 1264.64 L767.93 1262.27 L766.52 1263.00 L765.01 1263.48 L764.88 1266.96 L761.12 1266.96 L760.99 1263.48 L759.48 1263.00 L758.07 1262.27 L755.52 1264.64 L752.86 1261.98 L755.23 1259.43 L754.50 1258.02 L754.02 1256.51 L750.54 1256.38 L750.54 1252.62 L754.02 1252.49 L754.50 1250.98 L755.23 1249.57 L752.86 1247.02 L755.52 1244.36 L758.07 1246.73 L759.48 1246.00 Z" stroke="#2a8cf7" stroke-width="2.2" stroke-linejoin="round"/><circle cx="763" cy="1254.5" r="4.2" stroke="#2a8cf7" stroke-width="2.2"/><path d="M750 1302.0 Q750 1299.5 752.5 1299.5 H760.08 L763.08 1303.02 H775.5 Q778 1303.02 778 1305.52 V1319.0 Q778 1321.5 775.5 1321.5 H752.5 Q750 1321.5 750 1319.0 Z M750 1306.98 H778" stroke="#2a8cf7" stroke-width="2.4" stroke-linejoin="round" fill="none"/><path d="M750 1358.0 Q750 1355.5 752.5 1355.5 H760.08 L763.08 1359.02 H775.5 Q778 1359.02 778 1361.52 V1375.0 Q778 1377.5 775.5 1377.5 H752.5 Q750 1377.5 750 1375.0 Z M750 1362.98 H778" stroke="#2a8cf7" stroke-width="2.4" stroke-linejoin="round" fill="none"/><path d="M1181 668 L1169.5 678.75 L1181 689.5" stroke="#8e8e8e" stroke-width="2" stroke-linecap="round" stroke-linejoin="round" fill="none"/><path d="M1220.5 668 L1232 678.75 L1220.5 689.5" stroke="#8e8e8e" stroke-width="2" stroke-linecap="round" stroke-linejoin="round" fill="none"/><circle cx="1286.4" cy="671" r="1.7" fill="#d0d0d0"/><circle cx="1286.4" cy="678.8" r="1.7" fill="#d0d0d0"/><circle cx="1286.4" cy="686.3" r="1.7" fill="#d0d0d0"/><path d="M1292 671H1310.5M1292 678.8H1310.5M1292 686.3H1310.5" stroke="#d0d0d0" stroke-width="1.8" stroke-linecap="round"/><path d="M1330 677 L1336.25 684 L1342.5 677" stroke="#d0d0d0" stroke-width="2.6" stroke-linecap="round" stroke-linejoin="round" fill="none"/><rect x="1391.8" y="672" width="6.4" height="5.8" rx="1.2" stroke="#d0d0d0" stroke-width="1.5"/><rect x="1401.5" y="672" width="6.4" height="5.8" rx="1.2" stroke="#d0d0d0" stroke-width="1.5"/><rect x="1411.2" y="672" width="6.4" height="5.8" rx="1.2" stroke="#d0d0d0" stroke-width="1.5"/><rect x="1391.8" y="686" width="6.4" height="5.8" rx="1.2" stroke="#d0d0d0" stroke-width="1.5"/><rect x="1401.5" y="686" width="6.4" height="5.8" rx="1.2" stroke="#d0d0d0" stroke-width="1.5"/><rect x="1411.2" y="686" width="6.4" height="5.8" rx="1.2" stroke="#d0d0d0" stroke-width="1.5"/><path d="M1391 667H1418.2M1391 681.6H1418.2" stroke="#d0d0d0" stroke-width="1.4"/><path d="M1436 677 L1442.25 684 L1448.5 677" stroke="#d0d0d0" stroke-width="2.6" stroke-linecap="round" stroke-linejoin="round" fill="none"/><path d="M1496 670.5 Q1496 668 1498.5 668 H1505 L1507.5 670 H1522 Q1524.5 670 1524.5 672.5 V690 Q1524.5 692.5 1522 692.5 H1498.5 Q1496 692.5 1496 690 Z" fill="#5ab4f0"/><path d="M1496 674 H1524.5 V690 Q1524.5 692.5 1522 692.5 H1498.5 Q1496 692.5 1496 690 Z" fill="#4aa3e6"/><path d="M1866 676L1872 670L1878 676M1866 684L1872 690L1878 684" stroke="#fff" stroke-width="2.2" stroke-linecap="round" stroke-linejoin="round"/><path d="M1922.5 683 L1928.5 676 L1934.5 683" stroke="#e0e0e0" stroke-width="2.4" stroke-linecap="round" stroke-linejoin="round" fill="none"/><circle cx="1990.5" cy="677" r="8.5" stroke="#d8d8d8" stroke-width="2.2"/><path d="M1996.5 683L2003.5 690" stroke="#d8d8d8" stroke-width="2.6" stroke-linecap="round"/><path d="M1512 776 L1519.5 768 L1527 776" stroke="#9a9a9a" stroke-width="1.8" stroke-linecap="round" stroke-linejoin="round" fill="none"/><path d="M1171 818 H1185 L1193 826 V842 H1171 Z" fill="#8a8a8a"/><path d="M1185 818 V826 H1193" fill="#6a6a6a"/><path d="M2000 1002L2006 996L2012 1002M2000 1010L2006 1016L2012 1010" stroke="#fff" stroke-width="2.2" stroke-linecap="round" stroke-linejoin="round"/><path d="M1522 997.64 Q1522 995 1524.64 995 H1530.4 Q1532.4 995 1534.4 997.86 H1545.36 Q1548 997.86 1548 1000.5 V1001.6 H1522 Z" fill="#8a8a8a"/><path d="M1522 1003.36 H1548 V1014.36 Q1548 1017 1545.36 1017 H1524.64 Q1522 1017 1522 1014.36 Z" fill="#8a8a8a"/><path d="M1530 1064.5L1536 1071L1546.5 1056" stroke="#fff" stroke-width="3" stroke-linecap="round" stroke-linejoin="round"/><path d="M1578.6 1058.02 L1585.08 1070.08 M1581.12 1058.02 L1574.55 1070.08 M1572.48 1067.38 H1586.52" stroke="#232323" stroke-width="1.9" stroke-linecap="round"/></svg>
<div class="r" style="left:0px;top:0px;width:3024px;height:2px;background:#383838;"></div>
</div></body></html>
